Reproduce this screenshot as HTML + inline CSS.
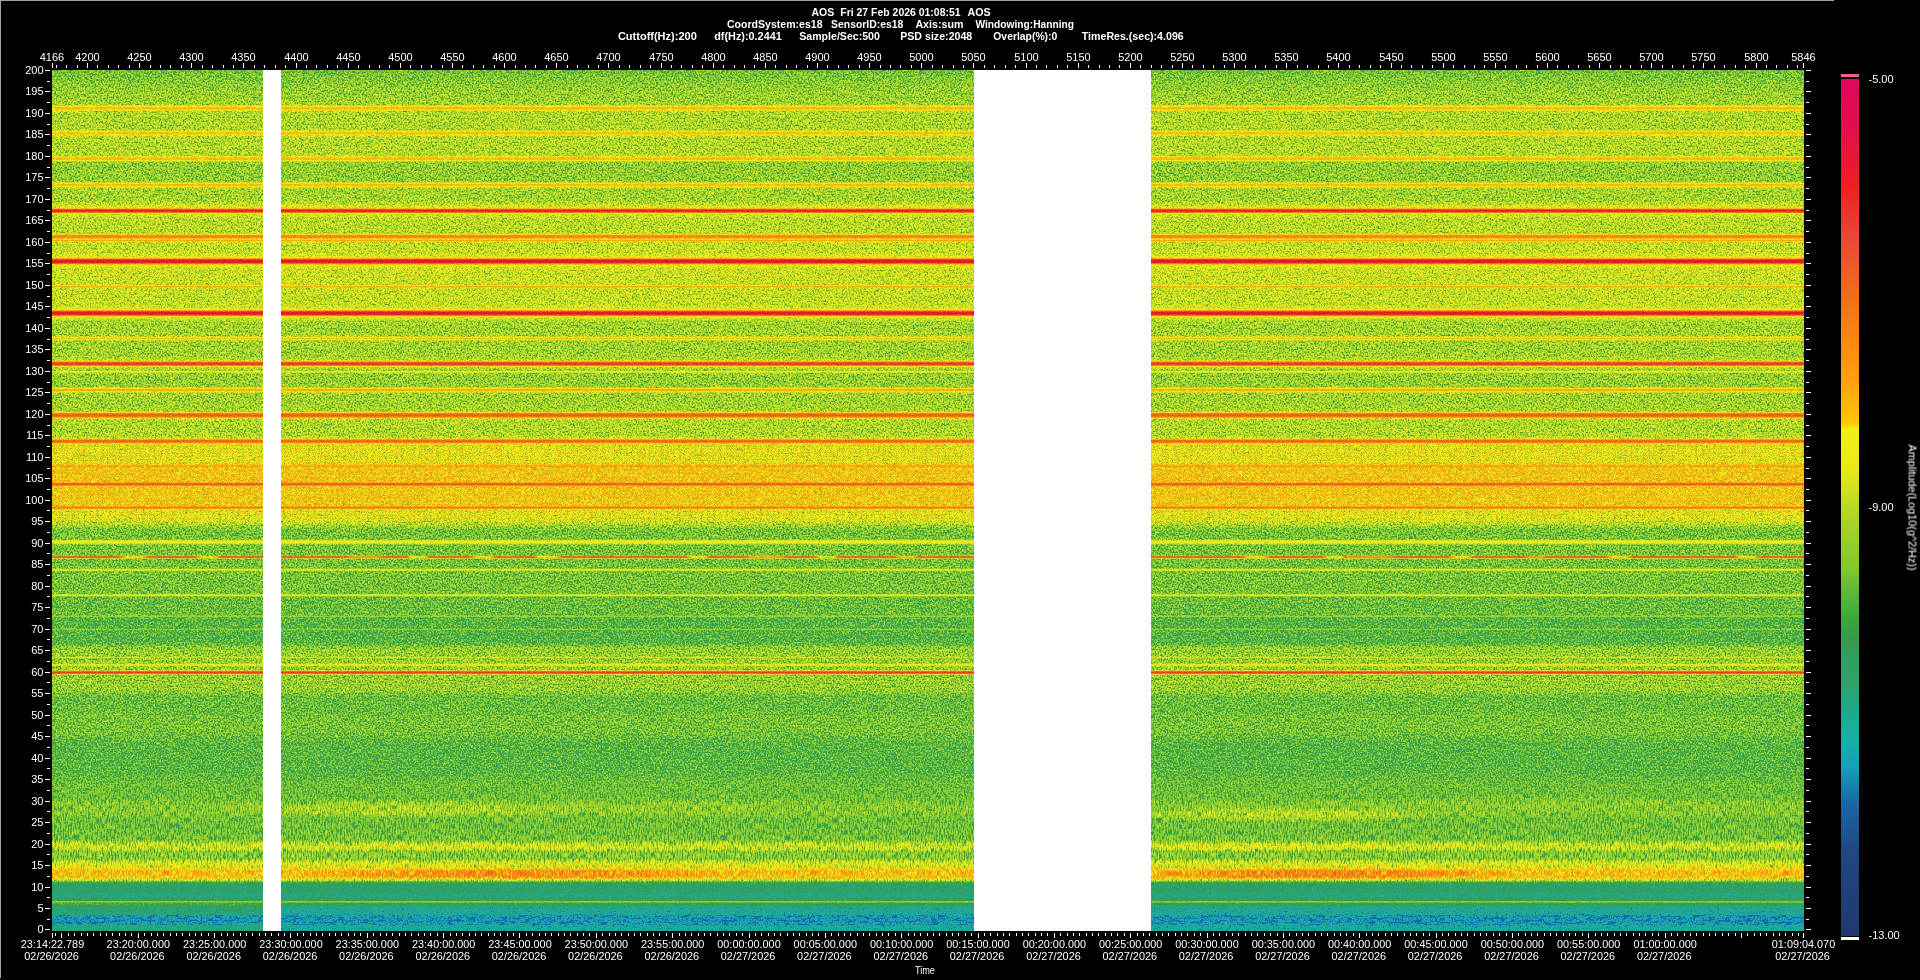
<!DOCTYPE html>
<html><head><meta charset="utf-8"><title>AOS spectrogram</title>
<style>html,body{margin:0;padding:0;background:#000;overflow:hidden}svg{display:block}text{font-family:"Liberation Sans",sans-serif;fill:#fff}</style></head><body>
<svg width="1920" height="980" viewBox="0 0 1920 980" shape-rendering="crispEdges">
<defs>
<linearGradient id="mg" gradientUnits="userSpaceOnUse" x1="0" y1="0" x2="0" y2="980">
<stop offset="0.07194" stop-color="#6aff00"/>
<stop offset="0.08010" stop-color="#6fff00"/>
<stop offset="0.09133" stop-color="#75ff00"/>
<stop offset="0.10561" stop-color="#78fe00"/>
<stop offset="0.10663" stop-color="#7af100"/>
<stop offset="0.10765" stop-color="#82a700"/>
<stop offset="0.10867" stop-color="#916300"/>
<stop offset="0.10969" stop-color="#9c5000"/>
<stop offset="0.11071" stop-color="#9e4e00"/>
<stop offset="0.11173" stop-color="#965a00"/>
<stop offset="0.11276" stop-color="#888a00"/>
<stop offset="0.11378" stop-color="#7ee100"/>
<stop offset="0.11480" stop-color="#7cfd00"/>
<stop offset="0.13112" stop-color="#7cff00"/>
<stop offset="0.13214" stop-color="#7cf500"/>
<stop offset="0.13316" stop-color="#82b800"/>
<stop offset="0.13418" stop-color="#8f6e00"/>
<stop offset="0.13520" stop-color="#9a5600"/>
<stop offset="0.13622" stop-color="#9c5400"/>
<stop offset="0.13724" stop-color="#956200"/>
<stop offset="0.13827" stop-color="#889900"/>
<stop offset="0.13929" stop-color="#7fe800"/>
<stop offset="0.14031" stop-color="#7dfe00"/>
<stop offset="0.15663" stop-color="#7dff00"/>
<stop offset="0.15765" stop-color="#7dfd00"/>
<stop offset="0.15867" stop-color="#80de00"/>
<stop offset="0.15969" stop-color="#8a8700"/>
<stop offset="0.16071" stop-color="#975800"/>
<stop offset="0.16173" stop-color="#9e4d00"/>
<stop offset="0.16276" stop-color="#9b4f00"/>
<stop offset="0.16378" stop-color="#8f6000"/>
<stop offset="0.16480" stop-color="#7ea100"/>
<stop offset="0.16582" stop-color="#75f000"/>
<stop offset="0.16684" stop-color="#74fe00"/>
<stop offset="0.18316" stop-color="#74ff00"/>
<stop offset="0.18418" stop-color="#74fd00"/>
<stop offset="0.18520" stop-color="#76e200"/>
<stop offset="0.18622" stop-color="#828600"/>
<stop offset="0.18724" stop-color="#925700"/>
<stop offset="0.18827" stop-color="#9c4c00"/>
<stop offset="0.18929" stop-color="#9c4d00"/>
<stop offset="0.19031" stop-color="#935b00"/>
<stop offset="0.19133" stop-color="#839400"/>
<stop offset="0.19235" stop-color="#7ae900"/>
<stop offset="0.19337" stop-color="#79fe00"/>
<stop offset="0.20357" stop-color="#79fe00"/>
<stop offset="0.20459" stop-color="#79fd00"/>
<stop offset="0.20663" stop-color="#7df500"/>
<stop offset="0.20765" stop-color="#80eb00"/>
<stop offset="0.20969" stop-color="#86cb00"/>
<stop offset="0.21173" stop-color="#8ba100"/>
<stop offset="0.21276" stop-color="#9d5900"/>
<stop offset="0.21378" stop-color="#c94100"/>
<stop offset="0.21480" stop-color="#de4000"/>
<stop offset="0.21582" stop-color="#d94000"/>
<stop offset="0.21684" stop-color="#b94300"/>
<stop offset="0.21786" stop-color="#907b00"/>
<stop offset="0.21888" stop-color="#88a100"/>
<stop offset="0.22092" stop-color="#83ce00"/>
<stop offset="0.22194" stop-color="#81e300"/>
<stop offset="0.22296" stop-color="#80f100"/>
<stop offset="0.22398" stop-color="#7ff900"/>
<stop offset="0.22500" stop-color="#7ffd00"/>
<stop offset="0.22704" stop-color="#7fff00"/>
<stop offset="0.23724" stop-color="#7ffd00"/>
<stop offset="0.23827" stop-color="#83cf00"/>
<stop offset="0.23929" stop-color="#976300"/>
<stop offset="0.24031" stop-color="#ab4800"/>
<stop offset="0.24133" stop-color="#b34500"/>
<stop offset="0.24235" stop-color="#ad4700"/>
<stop offset="0.24337" stop-color="#9c5b00"/>
<stop offset="0.24439" stop-color="#8e8a00"/>
<stop offset="0.24541" stop-color="#a35100"/>
<stop offset="0.24643" stop-color="#976800"/>
<stop offset="0.24745" stop-color="#83f600"/>
<stop offset="0.24847" stop-color="#82ff00"/>
<stop offset="0.25459" stop-color="#82ff00"/>
<stop offset="0.25663" stop-color="#82fb00"/>
<stop offset="0.25765" stop-color="#83f500"/>
<stop offset="0.25867" stop-color="#84e700"/>
<stop offset="0.25969" stop-color="#86d100"/>
<stop offset="0.26071" stop-color="#89b400"/>
<stop offset="0.26173" stop-color="#8d9900"/>
<stop offset="0.26276" stop-color="#918100"/>
<stop offset="0.26378" stop-color="#a54f00"/>
<stop offset="0.26480" stop-color="#cd4100"/>
<stop offset="0.26582" stop-color="#e64000"/>
<stop offset="0.26684" stop-color="#ec4000"/>
<stop offset="0.26786" stop-color="#de4000"/>
<stop offset="0.26888" stop-color="#be4200"/>
<stop offset="0.26990" stop-color="#996900"/>
<stop offset="0.27092" stop-color="#908f00"/>
<stop offset="0.27296" stop-color="#89c500"/>
<stop offset="0.27398" stop-color="#86de00"/>
<stop offset="0.27500" stop-color="#85ef00"/>
<stop offset="0.27602" stop-color="#84f900"/>
<stop offset="0.27704" stop-color="#84fd00"/>
<stop offset="0.27908" stop-color="#84ff00"/>
<stop offset="0.29031" stop-color="#84fd00"/>
<stop offset="0.29133" stop-color="#8f9300"/>
<stop offset="0.29235" stop-color="#a35200"/>
<stop offset="0.29337" stop-color="#996500"/>
<stop offset="0.29439" stop-color="#84eb00"/>
<stop offset="0.29541" stop-color="#82ff00"/>
<stop offset="0.30765" stop-color="#82ff00"/>
<stop offset="0.30969" stop-color="#82fc00"/>
<stop offset="0.31071" stop-color="#83f600"/>
<stop offset="0.31173" stop-color="#84ea00"/>
<stop offset="0.31276" stop-color="#85d600"/>
<stop offset="0.31480" stop-color="#8b9f00"/>
<stop offset="0.31582" stop-color="#8f8200"/>
<stop offset="0.31684" stop-color="#a64b00"/>
<stop offset="0.31786" stop-color="#cd4000"/>
<stop offset="0.31888" stop-color="#e44000"/>
<stop offset="0.31990" stop-color="#e84000"/>
<stop offset="0.32092" stop-color="#d94000"/>
<stop offset="0.32194" stop-color="#b74200"/>
<stop offset="0.32296" stop-color="#925f00"/>
<stop offset="0.32398" stop-color="#897800"/>
<stop offset="0.32500" stop-color="#859000"/>
<stop offset="0.32602" stop-color="#80ae00"/>
<stop offset="0.32704" stop-color="#7dce00"/>
<stop offset="0.32806" stop-color="#7ae700"/>
<stop offset="0.32908" stop-color="#79f500"/>
<stop offset="0.33010" stop-color="#79fc00"/>
<stop offset="0.33316" stop-color="#78ff00"/>
<stop offset="0.34235" stop-color="#79fd00"/>
<stop offset="0.34337" stop-color="#7fb900"/>
<stop offset="0.34439" stop-color="#935a00"/>
<stop offset="0.34541" stop-color="#9d4d00"/>
<stop offset="0.34643" stop-color="#935a00"/>
<stop offset="0.34745" stop-color="#7eb600"/>
<stop offset="0.34847" stop-color="#78fd00"/>
<stop offset="0.34949" stop-color="#78ff00"/>
<stop offset="0.35969" stop-color="#78ff00"/>
<stop offset="0.36173" stop-color="#78fc00"/>
<stop offset="0.36276" stop-color="#78f800"/>
<stop offset="0.36378" stop-color="#79ee00"/>
<stop offset="0.36480" stop-color="#7adf00"/>
<stop offset="0.36582" stop-color="#7cca00"/>
<stop offset="0.36684" stop-color="#7eb300"/>
<stop offset="0.36786" stop-color="#839500"/>
<stop offset="0.36888" stop-color="#a14900"/>
<stop offset="0.36990" stop-color="#c54000"/>
<stop offset="0.37092" stop-color="#d54000"/>
<stop offset="0.37194" stop-color="#d04000"/>
<stop offset="0.37296" stop-color="#b54200"/>
<stop offset="0.37398" stop-color="#8c6700"/>
<stop offset="0.37500" stop-color="#7fa400"/>
<stop offset="0.37704" stop-color="#7ad100"/>
<stop offset="0.37806" stop-color="#7acf00"/>
<stop offset="0.37908" stop-color="#8d6300"/>
<stop offset="0.38010" stop-color="#858000"/>
<stop offset="0.38112" stop-color="#76fa00"/>
<stop offset="0.38316" stop-color="#75ff00"/>
<stop offset="0.39337" stop-color="#75ff00"/>
<stop offset="0.39439" stop-color="#76f600"/>
<stop offset="0.39541" stop-color="#7fa000"/>
<stop offset="0.39643" stop-color="#935800"/>
<stop offset="0.39745" stop-color="#a04a00"/>
<stop offset="0.39847" stop-color="#a04a00"/>
<stop offset="0.39949" stop-color="#935a00"/>
<stop offset="0.40051" stop-color="#81a800"/>
<stop offset="0.40153" stop-color="#79f800"/>
<stop offset="0.40255" stop-color="#78ff00"/>
<stop offset="0.41071" stop-color="#78ff00"/>
<stop offset="0.41480" stop-color="#79fe00"/>
<stop offset="0.41684" stop-color="#79f700"/>
<stop offset="0.41888" stop-color="#7be600"/>
<stop offset="0.41990" stop-color="#7fc000"/>
<stop offset="0.42092" stop-color="#965900"/>
<stop offset="0.42194" stop-color="#b24300"/>
<stop offset="0.42296" stop-color="#c24100"/>
<stop offset="0.42398" stop-color="#c54100"/>
<stop offset="0.42500" stop-color="#ba4200"/>
<stop offset="0.42602" stop-color="#a24b00"/>
<stop offset="0.42704" stop-color="#869900"/>
<stop offset="0.42806" stop-color="#7ee300"/>
<stop offset="0.42908" stop-color="#7df000"/>
<stop offset="0.43010" stop-color="#7cf700"/>
<stop offset="0.43112" stop-color="#7cfb00"/>
<stop offset="0.43214" stop-color="#7cfd00"/>
<stop offset="0.43418" stop-color="#7cff00"/>
<stop offset="0.43520" stop-color="#7cff00"/>
<stop offset="0.44235" stop-color="#7cfd00"/>
<stop offset="0.44337" stop-color="#7cfa00"/>
<stop offset="0.44439" stop-color="#7df600"/>
<stop offset="0.44643" stop-color="#82ed00"/>
<stop offset="0.44745" stop-color="#88c900"/>
<stop offset="0.44847" stop-color="#a35500"/>
<stop offset="0.44949" stop-color="#bd4400"/>
<stop offset="0.45051" stop-color="#c24300"/>
<stop offset="0.45153" stop-color="#b24b00"/>
<stop offset="0.45255" stop-color="#97a100"/>
<stop offset="0.45357" stop-color="#8ff400"/>
<stop offset="0.45561" stop-color="#8efb00"/>
<stop offset="0.45969" stop-color="#8eff00"/>
<stop offset="0.47092" stop-color="#8eff00"/>
<stop offset="0.47296" stop-color="#92ff00"/>
<stop offset="0.47398" stop-color="#95e900"/>
<stop offset="0.47500" stop-color="#a48500"/>
<stop offset="0.47602" stop-color="#a58c00"/>
<stop offset="0.47704" stop-color="#9af000"/>
<stop offset="0.47806" stop-color="#99ff00"/>
<stop offset="0.48724" stop-color="#99fe00"/>
<stop offset="0.49133" stop-color="#9af800"/>
<stop offset="0.49235" stop-color="#a2a700"/>
<stop offset="0.49337" stop-color="#bf4c00"/>
<stop offset="0.49439" stop-color="#c54700"/>
<stop offset="0.49541" stop-color="#ad6800"/>
<stop offset="0.49643" stop-color="#99ef00"/>
<stop offset="0.49745" stop-color="#98f900"/>
<stop offset="0.50051" stop-color="#98fe00"/>
<stop offset="0.50255" stop-color="#98ff00"/>
<stop offset="0.51480" stop-color="#98ff00"/>
<stop offset="0.51582" stop-color="#96fd00"/>
<stop offset="0.51684" stop-color="#a37e00"/>
<stop offset="0.51786" stop-color="#b94900"/>
<stop offset="0.51888" stop-color="#a85a00"/>
<stop offset="0.51990" stop-color="#8df300"/>
<stop offset="0.52092" stop-color="#8cff00"/>
<stop offset="0.53010" stop-color="#8cff00"/>
<stop offset="0.53112" stop-color="#88ff00"/>
<stop offset="0.53724" stop-color="#77ff00"/>
<stop offset="0.54031" stop-color="#6eff00"/>
<stop offset="0.54133" stop-color="#6cff00"/>
<stop offset="0.54847" stop-color="#6cff00"/>
<stop offset="0.54949" stop-color="#6df900"/>
<stop offset="0.55051" stop-color="#73b600"/>
<stop offset="0.55153" stop-color="#846200"/>
<stop offset="0.55255" stop-color="#904e00"/>
<stop offset="0.55357" stop-color="#904e00"/>
<stop offset="0.55459" stop-color="#846200"/>
<stop offset="0.55561" stop-color="#73b600"/>
<stop offset="0.55663" stop-color="#6df900"/>
<stop offset="0.55765" stop-color="#6cff00"/>
<stop offset="0.56582" stop-color="#6cfd00"/>
<stop offset="0.56684" stop-color="#74ad00"/>
<stop offset="0.56786" stop-color="#8c5300"/>
<stop offset="0.56888" stop-color="#914d00"/>
<stop offset="0.56990" stop-color="#7d7200"/>
<stop offset="0.57092" stop-color="#6cf200"/>
<stop offset="0.57194" stop-color="#6bff00"/>
<stop offset="0.57908" stop-color="#6bfe00"/>
<stop offset="0.58010" stop-color="#73a800"/>
<stop offset="0.58112" stop-color="#895600"/>
<stop offset="0.58214" stop-color="#836500"/>
<stop offset="0.58316" stop-color="#6ee700"/>
<stop offset="0.58418" stop-color="#6cff00"/>
<stop offset="0.60459" stop-color="#6cff00"/>
<stop offset="0.60561" stop-color="#6ee600"/>
<stop offset="0.60663" stop-color="#826200"/>
<stop offset="0.60765" stop-color="#895300"/>
<stop offset="0.60867" stop-color="#729e00"/>
<stop offset="0.60969" stop-color="#68fe00"/>
<stop offset="0.62704" stop-color="#68fe00"/>
<stop offset="0.62806" stop-color="#6fac00"/>
<stop offset="0.62908" stop-color="#767a00"/>
<stop offset="0.63010" stop-color="#66ea00"/>
<stop offset="0.63112" stop-color="#63ff00"/>
<stop offset="0.63214" stop-color="#62ff00"/>
<stop offset="0.64031" stop-color="#62fe00"/>
<stop offset="0.64133" stop-color="#69b900"/>
<stop offset="0.64235" stop-color="#718100"/>
<stop offset="0.64337" stop-color="#64eb00"/>
<stop offset="0.64439" stop-color="#62ff00"/>
<stop offset="0.65561" stop-color="#62ff00"/>
<stop offset="0.65663" stop-color="#64ff00"/>
<stop offset="0.66071" stop-color="#73ff00"/>
<stop offset="0.66173" stop-color="#75ff00"/>
<stop offset="0.66888" stop-color="#75ff00"/>
<stop offset="0.66990" stop-color="#79d000"/>
<stop offset="0.67092" stop-color="#838900"/>
<stop offset="0.67194" stop-color="#77e600"/>
<stop offset="0.67296" stop-color="#75ff00"/>
<stop offset="0.67602" stop-color="#75fd00"/>
<stop offset="0.67704" stop-color="#7bba00"/>
<stop offset="0.67806" stop-color="#8a6a00"/>
<stop offset="0.67908" stop-color="#887100"/>
<stop offset="0.68010" stop-color="#79d200"/>
<stop offset="0.68112" stop-color="#75fe00"/>
<stop offset="0.68316" stop-color="#75ff00"/>
<stop offset="0.68418" stop-color="#819500"/>
<stop offset="0.68520" stop-color="#bd4100"/>
<stop offset="0.68622" stop-color="#d44000"/>
<stop offset="0.68724" stop-color="#bd4100"/>
<stop offset="0.68827" stop-color="#819500"/>
<stop offset="0.68929" stop-color="#75ff00"/>
<stop offset="0.70357" stop-color="#75ff00"/>
<stop offset="0.70459" stop-color="#74ff00"/>
<stop offset="0.71071" stop-color="#69ff00"/>
<stop offset="0.71173" stop-color="#68ff00"/>
<stop offset="0.72602" stop-color="#68ff00"/>
<stop offset="0.73112" stop-color="#6cff00"/>
<stop offset="0.74643" stop-color="#6cff00"/>
<stop offset="0.75867" stop-color="#63ff00"/>
<stop offset="0.78520" stop-color="#63ff00"/>
<stop offset="0.78622" stop-color="#63ff02"/>
<stop offset="0.78724" stop-color="#63ff07"/>
<stop offset="0.80051" stop-color="#69ff44"/>
<stop offset="0.81480" stop-color="#69ff85"/>
<stop offset="0.81684" stop-color="#6cff8d"/>
<stop offset="0.81990" stop-color="#70ff8f"/>
<stop offset="0.83010" stop-color="#70ff98"/>
<stop offset="0.83622" stop-color="#69ff9d"/>
<stop offset="0.85663" stop-color="#6bffae"/>
<stop offset="0.85765" stop-color="#6effaf"/>
<stop offset="0.86071" stop-color="#7effb1"/>
<stop offset="0.86173" stop-color="#81ffb2"/>
<stop offset="0.86582" stop-color="#81ffb5"/>
<stop offset="0.86684" stop-color="#7effb6"/>
<stop offset="0.86888" stop-color="#72ffb8"/>
<stop offset="0.86990" stop-color="#70ffb9"/>
<stop offset="0.87602" stop-color="#70ffbe"/>
<stop offset="0.87704" stop-color="#73ffbf"/>
<stop offset="0.87806" stop-color="#7bffbf"/>
<stop offset="0.87908" stop-color="#82ffbf"/>
<stop offset="0.88010" stop-color="#86ffbf"/>
<stop offset="0.88418" stop-color="#89ffbf"/>
<stop offset="0.88520" stop-color="#8cffbf"/>
<stop offset="0.88724" stop-color="#98ffbf"/>
<stop offset="0.88827" stop-color="#9cffbf"/>
<stop offset="0.89439" stop-color="#9cffbf"/>
<stop offset="0.89541" stop-color="#98ffbf"/>
<stop offset="0.89643" stop-color="#91f9bf"/>
<stop offset="0.89745" stop-color="#89ecbf"/>
<stop offset="0.89847" stop-color="#7cdfb7"/>
<stop offset="0.89949" stop-color="#69d2a6"/>
<stop offset="0.90051" stop-color="#5bc695"/>
<stop offset="0.90153" stop-color="#52b984"/>
<stop offset="0.90255" stop-color="#4eb273"/>
<stop offset="0.90357" stop-color="#4eb262"/>
<stop offset="0.90459" stop-color="#4eb259"/>
<stop offset="0.90969" stop-color="#4db256"/>
<stop offset="0.91276" stop-color="#46b254"/>
<stop offset="0.91480" stop-color="#46b253"/>
<stop offset="0.91582" stop-color="#49b253"/>
<stop offset="0.91684" stop-color="#4eb252"/>
<stop offset="0.91786" stop-color="#51b252"/>
<stop offset="0.91888" stop-color="#597951"/>
<stop offset="0.91990" stop-color="#6e3d50"/>
<stop offset="0.92092" stop-color="#684750"/>
<stop offset="0.92194" stop-color="#53a24f"/>
<stop offset="0.92296" stop-color="#51b24f"/>
<stop offset="0.92398" stop-color="#4db24e"/>
<stop offset="0.92500" stop-color="#44b24e"/>
<stop offset="0.92602" stop-color="#40b24d"/>
<stop offset="0.93214" stop-color="#3eb24a"/>
<stop offset="0.93316" stop-color="#3bb249"/>
<stop offset="0.93418" stop-color="#36b249"/>
<stop offset="0.93520" stop-color="#33b248"/>
<stop offset="0.94133" stop-color="#33b245"/>
<stop offset="0.94235" stop-color="#35b244"/>
<stop offset="0.94337" stop-color="#39b243"/>
<stop offset="0.94439" stop-color="#3bb243"/>
<stop offset="0.94949" stop-color="#3bb240"/>
</linearGradient>
<linearGradient id="fb" gradientUnits="userSpaceOnUse" x1="0" y1="0" x2="0" y2="980">
<stop offset="0.07194" stop-color="#6fbf34"/>
<stop offset="0.10663" stop-color="#a4d128"/>
<stop offset="0.10765" stop-color="#c2db25"/>
<stop offset="0.10867" stop-color="#ecec18"/>
<stop offset="0.10969" stop-color="#ffbc09"/>
<stop offset="0.11071" stop-color="#ffb70a"/>
<stop offset="0.11173" stop-color="#f0f018"/>
<stop offset="0.11276" stop-color="#dfe51b"/>
<stop offset="0.11378" stop-color="#b2d628"/>
<stop offset="0.11480" stop-color="#abd428"/>
<stop offset="0.13214" stop-color="#add428"/>
<stop offset="0.13316" stop-color="#c4dc24"/>
<stop offset="0.13418" stop-color="#ebeb18"/>
<stop offset="0.13520" stop-color="#ffc508"/>
<stop offset="0.13622" stop-color="#ffbd09"/>
<stop offset="0.13724" stop-color="#efef18"/>
<stop offset="0.13827" stop-color="#dce41c"/>
<stop offset="0.13929" stop-color="#b6d728"/>
<stop offset="0.15765" stop-color="#b1d628"/>
<stop offset="0.15867" stop-color="#bad927"/>
<stop offset="0.15969" stop-color="#e7e818"/>
<stop offset="0.16071" stop-color="#f9dc0e"/>
<stop offset="0.16173" stop-color="#ffb60a"/>
<stop offset="0.16276" stop-color="#ffbf08"/>
<stop offset="0.16378" stop-color="#ebeb18"/>
<stop offset="0.16480" stop-color="#b2d628"/>
<stop offset="0.16582" stop-color="#96cd2b"/>
<stop offset="0.18418" stop-color="#93cd2b"/>
<stop offset="0.18520" stop-color="#99ce2a"/>
<stop offset="0.18622" stop-color="#c3dc24"/>
<stop offset="0.18724" stop-color="#eded18"/>
<stop offset="0.18827" stop-color="#ffbc09"/>
<stop offset="0.18929" stop-color="#ffbc09"/>
<stop offset="0.19031" stop-color="#eded18"/>
<stop offset="0.19235" stop-color="#a5d228"/>
<stop offset="0.20357" stop-color="#a0d028"/>
<stop offset="0.20765" stop-color="#b8d828"/>
<stop offset="0.21071" stop-color="#dfe51b"/>
<stop offset="0.21173" stop-color="#e8e818"/>
<stop offset="0.21276" stop-color="#ffb80a"/>
<stop offset="0.21378" stop-color="#eb582b"/>
<stop offset="0.21480" stop-color="#ec2221"/>
<stop offset="0.21582" stop-color="#ea312a"/>
<stop offset="0.21684" stop-color="#f37917"/>
<stop offset="0.21786" stop-color="#ebeb18"/>
<stop offset="0.22194" stop-color="#bfda26"/>
<stop offset="0.23724" stop-color="#b7d828"/>
<stop offset="0.23827" stop-color="#cade22"/>
<stop offset="0.23929" stop-color="#f1ed17"/>
<stop offset="0.24031" stop-color="#fc9512"/>
<stop offset="0.24133" stop-color="#f78514"/>
<stop offset="0.24235" stop-color="#fa9013"/>
<stop offset="0.24337" stop-color="#ffbd09"/>
<stop offset="0.24439" stop-color="#eaea18"/>
<stop offset="0.24541" stop-color="#ffa70e"/>
<stop offset="0.24643" stop-color="#f6e412"/>
<stop offset="0.24745" stop-color="#c7dd23"/>
<stop offset="0.25765" stop-color="#c8dd23"/>
<stop offset="0.25969" stop-color="#d5e21e"/>
<stop offset="0.26173" stop-color="#e9e918"/>
<stop offset="0.26276" stop-color="#ecec18"/>
<stop offset="0.26378" stop-color="#ffa010"/>
<stop offset="0.26480" stop-color="#e94f33"/>
<stop offset="0.26582" stop-color="#e81931"/>
<stop offset="0.26684" stop-color="#e41340"/>
<stop offset="0.26786" stop-color="#ec2221"/>
<stop offset="0.26888" stop-color="#f06e19"/>
<stop offset="0.26990" stop-color="#ffca08"/>
<stop offset="0.27092" stop-color="#ebeb18"/>
<stop offset="0.27602" stop-color="#cedf21"/>
<stop offset="0.29031" stop-color="#ccdf21"/>
<stop offset="0.29133" stop-color="#ebeb18"/>
<stop offset="0.29235" stop-color="#ffa60e"/>
<stop offset="0.29337" stop-color="#ffc808"/>
<stop offset="0.29439" stop-color="#ccdf21"/>
<stop offset="0.29541" stop-color="#c4dc24"/>
<stop offset="0.31071" stop-color="#c7dd23"/>
<stop offset="0.31276" stop-color="#d3e11f"/>
<stop offset="0.31480" stop-color="#e8e818"/>
<stop offset="0.31582" stop-color="#ebeb18"/>
<stop offset="0.31684" stop-color="#fe9e10"/>
<stop offset="0.31786" stop-color="#e94e33"/>
<stop offset="0.31888" stop-color="#e91b2d"/>
<stop offset="0.31990" stop-color="#e61736"/>
<stop offset="0.32092" stop-color="#ea312a"/>
<stop offset="0.32194" stop-color="#f47d16"/>
<stop offset="0.32296" stop-color="#eded18"/>
<stop offset="0.32398" stop-color="#e3e61a"/>
<stop offset="0.32602" stop-color="#bbd927"/>
<stop offset="0.32806" stop-color="#a6d228"/>
<stop offset="0.34235" stop-color="#a0d028"/>
<stop offset="0.34337" stop-color="#b5d728"/>
<stop offset="0.34439" stop-color="#eeee18"/>
<stop offset="0.34541" stop-color="#ffb80a"/>
<stop offset="0.34643" stop-color="#eeee18"/>
<stop offset="0.34745" stop-color="#b4d728"/>
<stop offset="0.34847" stop-color="#9dcf29"/>
<stop offset="0.36378" stop-color="#a1d028"/>
<stop offset="0.36684" stop-color="#b4d728"/>
<stop offset="0.36786" stop-color="#c6dd23"/>
<stop offset="0.36888" stop-color="#ffae0c"/>
<stop offset="0.36990" stop-color="#ed6025"/>
<stop offset="0.37092" stop-color="#e93b30"/>
<stop offset="0.37194" stop-color="#e84937"/>
<stop offset="0.37296" stop-color="#f58115"/>
<stop offset="0.37398" stop-color="#e9e918"/>
<stop offset="0.37500" stop-color="#b7d828"/>
<stop offset="0.37704" stop-color="#a4d128"/>
<stop offset="0.37806" stop-color="#a4d128"/>
<stop offset="0.37908" stop-color="#eaea18"/>
<stop offset="0.38010" stop-color="#d0e020"/>
<stop offset="0.38112" stop-color="#98ce2a"/>
<stop offset="0.39439" stop-color="#99ce2a"/>
<stop offset="0.39541" stop-color="#b8d828"/>
<stop offset="0.39643" stop-color="#eeee18"/>
<stop offset="0.39745" stop-color="#ffb00c"/>
<stop offset="0.39847" stop-color="#ffb00c"/>
<stop offset="0.39949" stop-color="#eeee18"/>
<stop offset="0.40051" stop-color="#bdda26"/>
<stop offset="0.40153" stop-color="#a1d028"/>
<stop offset="0.41786" stop-color="#a5d228"/>
<stop offset="0.41888" stop-color="#a9d328"/>
<stop offset="0.41990" stop-color="#b6d728"/>
<stop offset="0.42092" stop-color="#efef18"/>
<stop offset="0.42194" stop-color="#f78714"/>
<stop offset="0.42296" stop-color="#ee6620"/>
<stop offset="0.42398" stop-color="#ed6025"/>
<stop offset="0.42500" stop-color="#f27717"/>
<stop offset="0.42602" stop-color="#ffa90e"/>
<stop offset="0.42704" stop-color="#d6e21e"/>
<stop offset="0.42806" stop-color="#b2d628"/>
<stop offset="0.44337" stop-color="#acd428"/>
<stop offset="0.44541" stop-color="#b9d828"/>
<stop offset="0.44643" stop-color="#c5dc24"/>
<stop offset="0.44745" stop-color="#dce41c"/>
<stop offset="0.44847" stop-color="#ffa60e"/>
<stop offset="0.44949" stop-color="#f07218"/>
<stop offset="0.45051" stop-color="#ee6620"/>
<stop offset="0.45153" stop-color="#f78614"/>
<stop offset="0.45255" stop-color="#f0f018"/>
<stop offset="0.47398" stop-color="#efef18"/>
<stop offset="0.47500" stop-color="#ffa40f"/>
<stop offset="0.47602" stop-color="#ffa110"/>
<stop offset="0.47704" stop-color="#ffc108"/>
<stop offset="0.47806" stop-color="#ffc808"/>
<stop offset="0.49133" stop-color="#ffc508"/>
<stop offset="0.49235" stop-color="#ffab0d"/>
<stop offset="0.49337" stop-color="#f06e1a"/>
<stop offset="0.49439" stop-color="#ed6024"/>
<stop offset="0.49541" stop-color="#fa9013"/>
<stop offset="0.49643" stop-color="#ffca08"/>
<stop offset="0.51480" stop-color="#fcd50b"/>
<stop offset="0.51582" stop-color="#f0f018"/>
<stop offset="0.51684" stop-color="#ffa80e"/>
<stop offset="0.51786" stop-color="#f37817"/>
<stop offset="0.51888" stop-color="#fd9a11"/>
<stop offset="0.51990" stop-color="#e9e918"/>
<stop offset="0.53010" stop-color="#e9e918"/>
<stop offset="0.53418" stop-color="#b8d828"/>
<stop offset="0.54031" stop-color="#83c92f"/>
<stop offset="0.54949" stop-color="#80c830"/>
<stop offset="0.55051" stop-color="#91cc2c"/>
<stop offset="0.55153" stop-color="#cedf21"/>
<stop offset="0.55255" stop-color="#ecec18"/>
<stop offset="0.55357" stop-color="#ecec18"/>
<stop offset="0.55459" stop-color="#cedf21"/>
<stop offset="0.55561" stop-color="#91cc2c"/>
<stop offset="0.55663" stop-color="#80c830"/>
<stop offset="0.56582" stop-color="#7fc730"/>
<stop offset="0.56684" stop-color="#93cd2b"/>
<stop offset="0.56786" stop-color="#e9e918"/>
<stop offset="0.56888" stop-color="#ecec18"/>
<stop offset="0.56990" stop-color="#b1d628"/>
<stop offset="0.57092" stop-color="#7bc531"/>
<stop offset="0.57908" stop-color="#76c333"/>
<stop offset="0.58010" stop-color="#92cd2b"/>
<stop offset="0.58112" stop-color="#e2e61a"/>
<stop offset="0.58214" stop-color="#c7dd23"/>
<stop offset="0.58316" stop-color="#84c92f"/>
<stop offset="0.60459" stop-color="#7ec730"/>
<stop offset="0.60561" stop-color="#83c92f"/>
<stop offset="0.60663" stop-color="#c6dd23"/>
<stop offset="0.60765" stop-color="#e1e61a"/>
<stop offset="0.60867" stop-color="#8ecc2c"/>
<stop offset="0.60969" stop-color="#65ba37"/>
<stop offset="0.62704" stop-color="#65ba37"/>
<stop offset="0.62806" stop-color="#85c92f"/>
<stop offset="0.62908" stop-color="#99ce2a"/>
<stop offset="0.63010" stop-color="#5cb638"/>
<stop offset="0.63112" stop-color="#4eb138"/>
<stop offset="0.64031" stop-color="#4cb038"/>
<stop offset="0.64133" stop-color="#69bd36"/>
<stop offset="0.64235" stop-color="#8ccb2d"/>
<stop offset="0.64337" stop-color="#52b338"/>
<stop offset="0.64439" stop-color="#4bb038"/>
<stop offset="0.65561" stop-color="#4bb038"/>
<stop offset="0.65663" stop-color="#54b338"/>
<stop offset="0.65867" stop-color="#7bc531"/>
<stop offset="0.66071" stop-color="#92cc2c"/>
<stop offset="0.66888" stop-color="#97ce2a"/>
<stop offset="0.66990" stop-color="#a2d128"/>
<stop offset="0.67092" stop-color="#c7dd23"/>
<stop offset="0.67194" stop-color="#9ccf29"/>
<stop offset="0.67602" stop-color="#97ce2a"/>
<stop offset="0.67704" stop-color="#aad328"/>
<stop offset="0.67806" stop-color="#e7e818"/>
<stop offset="0.67908" stop-color="#dee51b"/>
<stop offset="0.68010" stop-color="#a1d028"/>
<stop offset="0.68112" stop-color="#97ce2a"/>
<stop offset="0.68316" stop-color="#97ce2a"/>
<stop offset="0.68418" stop-color="#bdda26"/>
<stop offset="0.68520" stop-color="#f07118"/>
<stop offset="0.68622" stop-color="#e93e32"/>
<stop offset="0.68724" stop-color="#f07118"/>
<stop offset="0.68827" stop-color="#bdda26"/>
<stop offset="0.68929" stop-color="#97ce2a"/>
<stop offset="0.70459" stop-color="#94cd2b"/>
<stop offset="0.70867" stop-color="#7fc730"/>
<stop offset="0.71071" stop-color="#6abd36"/>
<stop offset="0.72602" stop-color="#64ba37"/>
<stop offset="0.73112" stop-color="#7ec731"/>
<stop offset="0.74745" stop-color="#78c432"/>
<stop offset="0.75867" stop-color="#4eb138"/>
<stop offset="0.81480" stop-color="#6dbe35"/>
<stop offset="0.81888" stop-color="#85c92f"/>
<stop offset="0.83112" stop-color="#86c92f"/>
<stop offset="0.83622" stop-color="#6dbf35"/>
<stop offset="0.85663" stop-color="#75c333"/>
<stop offset="0.85969" stop-color="#a0d028"/>
<stop offset="0.86071" stop-color="#b4d728"/>
<stop offset="0.86173" stop-color="#c0db25"/>
<stop offset="0.86582" stop-color="#c0db25"/>
<stop offset="0.86684" stop-color="#b3d628"/>
<stop offset="0.86888" stop-color="#8fcc2c"/>
<stop offset="0.86990" stop-color="#88ca2e"/>
<stop offset="0.87602" stop-color="#88ca2e"/>
<stop offset="0.87704" stop-color="#92cc2c"/>
<stop offset="0.87806" stop-color="#a7d228"/>
<stop offset="0.87908" stop-color="#c5dc24"/>
<stop offset="0.88010" stop-color="#d7e21e"/>
<stop offset="0.88418" stop-color="#e1e61a"/>
<stop offset="0.88622" stop-color="#eded18"/>
<stop offset="0.88724" stop-color="#ffcd08"/>
<stop offset="0.88827" stop-color="#ffbd09"/>
<stop offset="0.89439" stop-color="#ffbd09"/>
<stop offset="0.89541" stop-color="#ffd008"/>
<stop offset="0.89643" stop-color="#ecec18"/>
<stop offset="0.89745" stop-color="#e4e719"/>
<stop offset="0.89847" stop-color="#add428"/>
<stop offset="0.89949" stop-color="#6dbe35"/>
<stop offset="0.90051" stop-color="#38a142"/>
<stop offset="0.90153" stop-color="#319f5f"/>
<stop offset="0.90255" stop-color="#30a065"/>
<stop offset="0.90969" stop-color="#30a067"/>
<stop offset="0.91071" stop-color="#2ea16c"/>
<stop offset="0.91276" stop-color="#26a57d"/>
<stop offset="0.91480" stop-color="#26a57d"/>
<stop offset="0.91684" stop-color="#30a065"/>
<stop offset="0.91786" stop-color="#30a061"/>
<stop offset="0.91888" stop-color="#389b4b"/>
<stop offset="0.91990" stop-color="#84c92f"/>
<stop offset="0.92092" stop-color="#65ba37"/>
<stop offset="0.92194" stop-color="#329e5d"/>
<stop offset="0.92398" stop-color="#30a067"/>
<stop offset="0.92500" stop-color="#22a784"/>
<stop offset="0.92602" stop-color="#1dab94"/>
<stop offset="0.93214" stop-color="#1cac99"/>
<stop offset="0.93316" stop-color="#19afa3"/>
<stop offset="0.93418" stop-color="#18a7b1"/>
<stop offset="0.94133" stop-color="#18a1b7"/>
<stop offset="0.94337" stop-color="#18aeaa"/>
<stop offset="0.94949" stop-color="#19afa5"/>
</linearGradient>
<linearGradient id="cbg" gradientUnits="userSpaceOnUse" x1="0" y1="79" x2="0" y2="936">
<stop offset="0.0000" stop-color="#dc0860"/>
<stop offset="0.0630" stop-color="#e21048"/>
<stop offset="0.1260" stop-color="#ec2020"/>
<stop offset="0.1832" stop-color="#e84838"/>
<stop offset="0.2567" stop-color="#f07018"/>
<stop offset="0.3512" stop-color="#ffa010"/>
<stop offset="0.3932" stop-color="#ffc008"/>
<stop offset="0.4037" stop-color="#ffd008"/>
<stop offset="0.4084" stop-color="#f0f018"/>
<stop offset="0.4562" stop-color="#e8e818"/>
<stop offset="0.4796" stop-color="#d0e020"/>
<stop offset="0.4994" stop-color="#b8d828"/>
<stop offset="0.5263" stop-color="#a0d028"/>
<stop offset="0.5729" stop-color="#80c830"/>
<stop offset="0.5963" stop-color="#60b838"/>
<stop offset="0.6313" stop-color="#38a838"/>
<stop offset="0.6546" stop-color="#389850"/>
<stop offset="0.6779" stop-color="#30a060"/>
<stop offset="0.7013" stop-color="#30a068"/>
<stop offset="0.7363" stop-color="#20a888"/>
<stop offset="0.7713" stop-color="#18b0a8"/>
<stop offset="0.8016" stop-color="#18a0b8"/>
<stop offset="0.8436" stop-color="#1868a8"/>
<stop offset="0.9008" stop-color="#204880"/>
<stop offset="0.9988" stop-color="#203870"/>
</linearGradient>
<filter id="spec" filterUnits="userSpaceOnUse" x="52" y="70" width="1752" height="861" color-interpolation-filters="sRGB">
<feTurbulence type="fractalNoise" baseFrequency="0.83 0.71" numOctaves="2" seed="7" result="n0"/>
<feColorMatrix in="n0" type="matrix" values="1 0 0 0 0 1 0 0 0 0 1 0 0 0 0 0 0 0 0 1" result="n1"/>
<feConvolveMatrix in="n1" order="3" kernelMatrix="1 6 1 6 36 6 1 6 1" divisor="64" edgeMode="duplicate" preserveAlpha="true" result="ni"/>
<feTurbulence type="fractalNoise" baseFrequency="0.79 0.17" numOctaves="2" seed="11" result="s0"/>
<feColorMatrix in="s0" type="matrix" values="0.62 0 0 0 0.19 0.62 0 0 0 0.19 0.62 0 0 0 0.19 0 0 0 0 1" result="ns"/>
<feColorMatrix in="SourceGraphic" type="matrix" values="0 0 1 0 0 0 0 1 0 0 0 0 1 0 0 0 0 0 0 1" result="mb"/>
<feComposite in="mb" in2="ns" operator="arithmetic" k1="1" k2="0" k3="0" k4="0" result="t1"/>
<feComposite in="mb" in2="ni" operator="arithmetic" k1="-1" k2="0" k3="1" k4="0" result="t2"/>
<feComposite in="t1" in2="t2" operator="arithmetic" k1="0" k2="1" k3="1" k4="0" result="ng0"/>
<feComponentTransfer in="ng0" result="ng"><feFuncR type="table" tableValues="0 0.1875 0.5 0.6875 0.8750"/><feFuncG type="table" tableValues="0 0.1875 0.5 0.6875 0.8750"/><feFuncB type="table" tableValues="0 0.1875 0.5 0.6875 0.8750"/></feComponentTransfer>
<feColorMatrix in="SourceGraphic" type="matrix" values="1 0 0 0 0 1 0 0 0 0 1 0 0 0 0 0 0 0 0 1" result="mv"/>
<feColorMatrix in="SourceGraphic" type="matrix" values="0 1 0 0 0 0 1 0 0 0 0 1 0 0 0 0 0 0 0 1" result="ma"/>
<feComposite in="ma" in2="ng" operator="arithmetic" k1="0.9" k2="-0.45" k3="0" k4="0.5" result="nm"/>
<feComposite in="mv" in2="nm" operator="arithmetic" k1="0" k2="1" k3="1" k4="-0.4899" result="v"/>
<feComponentTransfer in="v" result="A"><feFuncR type="table" tableValues="0.125 0.125 0.125 0.125 0.125 0.125 0.125 0.125 0.125 0.125 0.125 0.125 0.125 0.125 0.125 0.125 0.124 0.121 0.118 0.114 0.111 0.107 0.104 0.100 0.097 0.094 0.094 0.094 0.094 0.094 0.094 0.094 0.094 0.094 0.094 0.094 0.094 0.097 0.103 0.108 0.114 0.120 0.125 0.136 0.147 0.158 0.170 0.181 0.188 0.188 0.188 0.188 0.193 0.202 0.210 0.218 0.220 0.220 0.220 0.223 0.251 0.279 0.307 0.335 0.363 0.394 0.427 0.461 0.494 0.515 0.532 0.549 0.565 0.582 0.599 0.616 0.634 0.656 0.678 0.700 0.722 0.751 0.781 0.810 0.836 0.862 0.887 0.910 0.914 0.918 0.922 0.927 0.931 0.935 0.939 0.974 1.000 1.000 1.000 1.000 1.000 1.000 1.000 1.000 0.999 0.995 0.991 0.987 0.983 0.980 0.976 0.972 0.968 0.964 0.960 0.956 0.952 0.948 0.945 0.941 0.938 0.936 0.933 0.930 0.928 0.925 0.922 0.920 0.917 0.914 0.912 0.910 0.912 0.914 0.916 0.917 0.919 0.921 0.922 0.924 0.925 0.921 0.917 0.913 0.909 0.905 0.901 0.898 0.894 0.890 0.886 0.884 0.881 0.879 0.877 0.874 0.872 0.870 0.867 0.865 0.863"/><feFuncG type="table" tableValues="0.220 0.224 0.228 0.232 0.236 0.240 0.244 0.248 0.252 0.256 0.260 0.264 0.268 0.272 0.276 0.280 0.286 0.300 0.314 0.328 0.341 0.355 0.369 0.382 0.396 0.412 0.445 0.478 0.510 0.543 0.576 0.608 0.633 0.646 0.659 0.671 0.684 0.687 0.682 0.676 0.670 0.665 0.659 0.654 0.648 0.642 0.637 0.631 0.627 0.627 0.627 0.627 0.622 0.614 0.606 0.597 0.611 0.627 0.644 0.660 0.671 0.683 0.694 0.705 0.716 0.730 0.747 0.764 0.781 0.788 0.792 0.796 0.800 0.804 0.809 0.813 0.818 0.825 0.832 0.840 0.847 0.857 0.867 0.877 0.885 0.894 0.902 0.910 0.914 0.918 0.922 0.927 0.931 0.935 0.939 0.871 0.791 0.753 0.734 0.716 0.697 0.679 0.660 0.641 0.624 0.612 0.599 0.587 0.574 0.562 0.550 0.537 0.525 0.512 0.500 0.487 0.475 0.463 0.450 0.438 0.424 0.411 0.398 0.384 0.371 0.358 0.344 0.331 0.318 0.304 0.291 0.276 0.259 0.242 0.225 0.208 0.191 0.174 0.157 0.139 0.124 0.118 0.112 0.106 0.099 0.093 0.087 0.081 0.075 0.068 0.062 0.059 0.056 0.053 0.050 0.047 0.044 0.041 0.038 0.034 0.031"/><feFuncB type="table" tableValues="0.439 0.443 0.447 0.451 0.455 0.459 0.463 0.467 0.471 0.475 0.479 0.483 0.487 0.491 0.495 0.499 0.507 0.524 0.541 0.558 0.576 0.593 0.610 0.627 0.644 0.660 0.669 0.679 0.688 0.697 0.707 0.716 0.716 0.703 0.690 0.678 0.665 0.646 0.624 0.602 0.579 0.557 0.535 0.512 0.490 0.467 0.445 0.423 0.405 0.397 0.388 0.380 0.366 0.350 0.333 0.316 0.292 0.267 0.242 0.220 0.220 0.220 0.220 0.220 0.220 0.215 0.207 0.199 0.190 0.185 0.181 0.177 0.172 0.168 0.164 0.160 0.157 0.157 0.157 0.157 0.157 0.147 0.137 0.127 0.119 0.110 0.102 0.094 0.094 0.094 0.094 0.094 0.094 0.094 0.094 0.059 0.031 0.031 0.036 0.041 0.045 0.050 0.055 0.059 0.063 0.065 0.067 0.070 0.072 0.074 0.076 0.078 0.080 0.082 0.084 0.086 0.088 0.090 0.092 0.095 0.106 0.117 0.127 0.138 0.149 0.159 0.170 0.181 0.191 0.202 0.213 0.216 0.206 0.196 0.185 0.175 0.165 0.154 0.144 0.134 0.128 0.144 0.159 0.175 0.191 0.206 0.222 0.237 0.253 0.268 0.283 0.293 0.302 0.311 0.321 0.330 0.339 0.348 0.358 0.367 0.376"/></feComponentTransfer>
<feConvolveMatrix in="A" order="3" kernelMatrix="1 2 1 2 4 2 1 2 1" divisor="16" edgeMode="duplicate" preserveAlpha="true" result="B"/>
<feColorMatrix in="A" type="matrix" values="0.299 0.587 0.114 0 0 0.299 0.587 0.114 0 0 0.299 0.587 0.114 0 0 0 0 0 0 1" result="YA"/>
<feColorMatrix in="B" type="matrix" values="0.299 0.587 0.114 0 0 0.299 0.587 0.114 0 0 0.299 0.587 0.114 0 0 0 0 0 0 1" result="YB"/>
<feComposite in="YA" in2="YB" operator="arithmetic" k1="0" k2="1" k3="-1" k4="0.5" result="D"/>
<feComposite in="B" in2="D" operator="arithmetic" k1="0" k2="1" k3="1" k4="-0.5"/>
</filter>
</defs>
<rect x="0" y="0" width="1920" height="980" fill="#000"/>
<rect x="0" y="0" width="1834" height="1" fill="#a0a0a0"/>
<rect x="0" y="0" width="1" height="978" fill="#a0a0a0"/>
<rect x="52" y="70" width="1752" height="861" fill="url(#fb)"/>
<g filter="url(#spec)">
<rect x="52" y="70" width="1752" height="861" fill="url(#mg)"/>
<rect x="52" y="903" width="211" height="12" fill="#ff8040" opacity="0.06"/>
<rect x="52" y="925" width="211" height="6" fill="#ff8040" opacity="0.06"/>
<radialGradient id="bl0"><stop offset="0" stop-color="#83ffa6" stop-opacity="0.6"/><stop offset="0.55" stop-color="#83ffa6" stop-opacity="0.450"/><stop offset="1" stop-color="#83ffa6" stop-opacity="0"/></radialGradient>
<ellipse cx="400" cy="809" rx="190" ry="9" fill="url(#bl0)"/>
<radialGradient id="bl1"><stop offset="0" stop-color="#7cffa6" stop-opacity="0.35"/><stop offset="0.55" stop-color="#7cffa6" stop-opacity="0.262"/><stop offset="1" stop-color="#7cffa6" stop-opacity="0"/></radialGradient>
<ellipse cx="640" cy="808" rx="150" ry="7" fill="url(#bl1)"/>
<radialGradient id="bl2"><stop offset="0" stop-color="#86ffa6" stop-opacity="0.7"/><stop offset="0.55" stop-color="#86ffa6" stop-opacity="0.525"/><stop offset="1" stop-color="#86ffa6" stop-opacity="0"/></radialGradient>
<ellipse cx="1285" cy="815" rx="170" ry="8" fill="url(#bl2)"/>
<radialGradient id="bl3"><stop offset="0" stop-color="#79ffa6" stop-opacity="0.3"/><stop offset="0.55" stop-color="#79ffa6" stop-opacity="0.225"/><stop offset="1" stop-color="#79ffa6" stop-opacity="0"/></radialGradient>
<ellipse cx="1560" cy="802" rx="200" ry="7" fill="url(#bl3)"/>
<radialGradient id="bl4"><stop offset="0" stop-color="#8fffa6" stop-opacity="0.4"/><stop offset="0.55" stop-color="#8fffa6" stop-opacity="0.300"/><stop offset="1" stop-color="#8fffa6" stop-opacity="0"/></radialGradient>
<ellipse cx="450" cy="846.5" rx="220" ry="4" fill="url(#bl4)"/>
<radialGradient id="bl5"><stop offset="0" stop-color="#93ffa6" stop-opacity="0.5"/><stop offset="0.55" stop-color="#93ffa6" stop-opacity="0.375"/><stop offset="1" stop-color="#93ffa6" stop-opacity="0"/></radialGradient>
<ellipse cx="1275" cy="846.5" rx="200" ry="4" fill="url(#bl5)"/>
<radialGradient id="bl6"><stop offset="0" stop-color="#bcffa6" stop-opacity="0.65"/><stop offset="0.55" stop-color="#bcffa6" stop-opacity="0.488"/><stop offset="1" stop-color="#bcffa6" stop-opacity="0"/></radialGradient>
<ellipse cx="520" cy="874" rx="240" ry="6" fill="url(#bl6)"/>
<radialGradient id="bl7"><stop offset="0" stop-color="#bfffa6" stop-opacity="0.7"/><stop offset="0.55" stop-color="#bfffa6" stop-opacity="0.525"/><stop offset="1" stop-color="#bfffa6" stop-opacity="0"/></radialGradient>
<ellipse cx="1320" cy="874" rx="200" ry="6" fill="url(#bl7)"/>
<linearGradient id="l86" gradientUnits="userSpaceOnUse" x1="52" y1="0" x2="1804" y2="0">
<stop offset="0.0000" stop-color="#c14c00"/>
<stop offset="0.0382" stop-color="#c14c00"/>
<stop offset="0.0422" stop-color="#964c00"/>
<stop offset="0.0514" stop-color="#964c00"/>
<stop offset="0.0554" stop-color="#c14c00"/>
<stop offset="0.0811" stop-color="#c14c00"/>
<stop offset="0.0850" stop-color="#964c00"/>
<stop offset="0.0930" stop-color="#964c00"/>
<stop offset="0.0970" stop-color="#c14c00"/>
<stop offset="0.1678" stop-color="#c14c00"/>
<stop offset="0.1718" stop-color="#a64c00"/>
<stop offset="0.1855" stop-color="#a64c00"/>
<stop offset="0.1895" stop-color="#c14c00"/>
<stop offset="0.2021" stop-color="#c14c00"/>
<stop offset="0.2061" stop-color="#834c00"/>
<stop offset="0.2118" stop-color="#834c00"/>
<stop offset="0.2158" stop-color="#c14c00"/>
<stop offset="0.2380" stop-color="#c14c00"/>
<stop offset="0.2420" stop-color="#964c00"/>
<stop offset="0.2500" stop-color="#964c00"/>
<stop offset="0.2540" stop-color="#c14c00"/>
<stop offset="0.2745" stop-color="#c14c00"/>
<stop offset="0.2785" stop-color="#964c00"/>
<stop offset="0.2877" stop-color="#964c00"/>
<stop offset="0.2917" stop-color="#c14c00"/>
<stop offset="0.3613" stop-color="#c14c00"/>
<stop offset="0.3653" stop-color="#964c00"/>
<stop offset="0.3721" stop-color="#964c00"/>
<stop offset="0.3761" stop-color="#c14c00"/>
<stop offset="0.3950" stop-color="#c14c00"/>
<stop offset="0.3990" stop-color="#a34c00"/>
<stop offset="0.4161" stop-color="#a34c00"/>
<stop offset="0.4201" stop-color="#c14c00"/>
<stop offset="0.4355" stop-color="#c14c00"/>
<stop offset="0.4395" stop-color="#834c00"/>
<stop offset="0.4452" stop-color="#834c00"/>
<stop offset="0.4492" stop-color="#c14c00"/>
<stop offset="0.4806" stop-color="#c14c00"/>
<stop offset="0.4846" stop-color="#994c00"/>
<stop offset="0.4914" stop-color="#994c00"/>
<stop offset="0.4954" stop-color="#c14c00"/>
<stop offset="0.6787" stop-color="#c14c00"/>
<stop offset="0.6826" stop-color="#964c00"/>
<stop offset="0.6918" stop-color="#964c00"/>
<stop offset="0.6958" stop-color="#c14c00"/>
<stop offset="0.7249" stop-color="#c14c00"/>
<stop offset="0.7289" stop-color="#834c00"/>
<stop offset="0.7346" stop-color="#834c00"/>
<stop offset="0.7386" stop-color="#c14c00"/>
<stop offset="0.7312" stop-color="#c14c00"/>
<stop offset="0.7352" stop-color="#ac4c00"/>
<stop offset="0.7637" stop-color="#ac4c00"/>
<stop offset="0.7677" stop-color="#c14c00"/>
<stop offset="0.7962" stop-color="#c14c00"/>
<stop offset="0.8002" stop-color="#964c00"/>
<stop offset="0.8082" stop-color="#964c00"/>
<stop offset="0.8122" stop-color="#c14c00"/>
<stop offset="0.8390" stop-color="#c14c00"/>
<stop offset="0.8430" stop-color="#a94c00"/>
<stop offset="0.8499" stop-color="#a94c00"/>
<stop offset="0.8539" stop-color="#c14c00"/>
<stop offset="0.8864" stop-color="#c14c00"/>
<stop offset="0.8904" stop-color="#964c00"/>
<stop offset="0.8984" stop-color="#964c00"/>
<stop offset="0.9024" stop-color="#c14c00"/>
<stop offset="0.9600" stop-color="#c14c00"/>
<stop offset="0.9640" stop-color="#964c00"/>
<stop offset="0.9720" stop-color="#964c00"/>
<stop offset="0.9760" stop-color="#c14c00"/>
<stop offset="1.0000" stop-color="#c14c00"/>
</linearGradient>
<rect x="52" y="556" width="1752" height="2" fill="url(#l86)"/>
</g>
<filter id="bs" filterUnits="userSpaceOnUse" x="52" y="915" width="1752" height="10" color-interpolation-filters="sRGB"><feTurbulence type="fractalNoise" baseFrequency="0.13 0.45" numOctaves="2" seed="5"/><feColorMatrix type="matrix" values="0 0 0 0 0.09 0 0 0 0 0.40 0 0 0 0 0.70 7 0 0 0 -3.85"/></filter>
<rect x="52" y="915" width="1752" height="10" filter="url(#bs)"/>
<rect x="263" y="70" width="18" height="861" fill="#fff"/>
<rect x="974" y="70" width="177" height="861" fill="#fff"/>
<path d="M56 65h1v3h-1zM66 65h1v3h-1zM77 65h1v3h-1zM87 63h1v5h-1zM97 65h1v3h-1zM108 65h1v3h-1zM118 65h1v3h-1zM129 65h1v3h-1zM139 63h1v5h-1zM150 65h1v3h-1zM160 65h1v3h-1zM170 65h1v3h-1zM181 65h1v3h-1zM191 63h1v5h-1zM202 65h1v3h-1zM212 65h1v3h-1zM223 65h1v3h-1zM233 65h1v3h-1zM243 63h1v5h-1zM254 65h1v3h-1zM264 65h1v3h-1zM275 65h1v3h-1zM285 65h1v3h-1zM296 63h1v5h-1zM306 65h1v3h-1zM316 65h1v3h-1zM327 65h1v3h-1zM337 65h1v3h-1zM348 63h1v5h-1zM358 65h1v3h-1zM369 65h1v3h-1zM379 65h1v3h-1zM389 65h1v3h-1zM400 63h1v5h-1zM410 65h1v3h-1zM421 65h1v3h-1zM431 65h1v3h-1zM442 65h1v3h-1zM452 63h1v5h-1zM462 65h1v3h-1zM473 65h1v3h-1zM483 65h1v3h-1zM494 65h1v3h-1zM504 63h1v5h-1zM515 65h1v3h-1zM525 65h1v3h-1zM535 65h1v3h-1zM546 65h1v3h-1zM556 63h1v5h-1zM567 65h1v3h-1zM577 65h1v3h-1zM588 65h1v3h-1zM598 65h1v3h-1zM608 63h1v5h-1zM619 65h1v3h-1zM629 65h1v3h-1zM640 65h1v3h-1zM650 65h1v3h-1zM661 63h1v5h-1zM671 65h1v3h-1zM681 65h1v3h-1zM692 65h1v3h-1zM702 65h1v3h-1zM713 63h1v5h-1zM723 65h1v3h-1zM734 65h1v3h-1zM744 65h1v3h-1zM754 65h1v3h-1zM765 63h1v5h-1zM775 65h1v3h-1zM786 65h1v3h-1zM796 65h1v3h-1zM807 65h1v3h-1zM817 63h1v5h-1zM827 65h1v3h-1zM838 65h1v3h-1zM848 65h1v3h-1zM859 65h1v3h-1zM869 63h1v5h-1zM880 65h1v3h-1zM890 65h1v3h-1zM900 65h1v3h-1zM911 65h1v3h-1zM921 63h1v5h-1zM932 65h1v3h-1zM942 65h1v3h-1zM953 65h1v3h-1zM963 65h1v3h-1zM973 63h1v5h-1zM984 65h1v3h-1zM994 65h1v3h-1zM1005 65h1v3h-1zM1015 65h1v3h-1zM1026 63h1v5h-1zM1036 65h1v3h-1zM1046 65h1v3h-1zM1057 65h1v3h-1zM1067 65h1v3h-1zM1078 63h1v5h-1zM1088 65h1v3h-1zM1099 65h1v3h-1zM1109 65h1v3h-1zM1119 65h1v3h-1zM1130 63h1v5h-1zM1140 65h1v3h-1zM1151 65h1v3h-1zM1161 65h1v3h-1zM1172 65h1v3h-1zM1182 63h1v5h-1zM1192 65h1v3h-1zM1203 65h1v3h-1zM1213 65h1v3h-1zM1224 65h1v3h-1zM1234 63h1v5h-1zM1245 65h1v3h-1zM1255 65h1v3h-1zM1265 65h1v3h-1zM1276 65h1v3h-1zM1286 63h1v5h-1zM1297 65h1v3h-1zM1307 65h1v3h-1zM1318 65h1v3h-1zM1328 65h1v3h-1zM1338 63h1v5h-1zM1349 65h1v3h-1zM1359 65h1v3h-1zM1370 65h1v3h-1zM1380 65h1v3h-1zM1391 63h1v5h-1zM1401 65h1v3h-1zM1411 65h1v3h-1zM1422 65h1v3h-1zM1432 65h1v3h-1zM1443 63h1v5h-1zM1453 65h1v3h-1zM1464 65h1v3h-1zM1474 65h1v3h-1zM1484 65h1v3h-1zM1495 63h1v5h-1zM1505 65h1v3h-1zM1516 65h1v3h-1zM1526 65h1v3h-1zM1537 65h1v3h-1zM1547 63h1v5h-1zM1557 65h1v3h-1zM1568 65h1v3h-1zM1578 65h1v3h-1zM1589 65h1v3h-1zM1599 63h1v5h-1zM1610 65h1v3h-1zM1620 65h1v3h-1zM1630 65h1v3h-1zM1641 65h1v3h-1zM1651 63h1v5h-1zM1662 65h1v3h-1zM1672 65h1v3h-1zM1683 65h1v3h-1zM1693 65h1v3h-1zM1703 63h1v5h-1zM1714 65h1v3h-1zM1724 65h1v3h-1zM1735 65h1v3h-1zM1745 65h1v3h-1zM1756 63h1v5h-1zM1766 65h1v3h-1zM1776 65h1v3h-1zM1787 65h1v3h-1zM1797 65h1v3h-1zM52 63h1v5h-1zM1803 63h1v5h-1zM55 933h1v3h-1zM61 933h1v5h-1zM68 933h1v3h-1zM74 933h1v3h-1zM81 933h1v3h-1zM87 933h1v3h-1zM93 933h1v3h-1zM100 933h1v3h-1zM106 933h1v3h-1zM112 933h1v3h-1zM119 933h1v3h-1zM125 933h1v3h-1zM131 933h1v3h-1zM138 933h1v5h-1zM144 933h1v3h-1zM151 933h1v3h-1zM157 933h1v3h-1zM163 933h1v3h-1zM170 933h1v3h-1zM176 933h1v3h-1zM182 933h1v3h-1zM189 933h1v3h-1zM195 933h1v3h-1zM201 933h1v3h-1zM208 933h1v3h-1zM214 933h1v5h-1zM221 933h1v3h-1zM227 933h1v3h-1zM233 933h1v3h-1zM240 933h1v3h-1zM246 933h1v3h-1zM252 933h1v3h-1zM259 933h1v3h-1zM265 933h1v3h-1zM271 933h1v3h-1zM278 933h1v3h-1zM284 933h1v3h-1zM290 933h1v5h-1zM297 933h1v3h-1zM303 933h1v3h-1zM310 933h1v3h-1zM316 933h1v3h-1zM322 933h1v3h-1zM329 933h1v3h-1zM335 933h1v3h-1zM341 933h1v3h-1zM348 933h1v3h-1zM354 933h1v3h-1zM360 933h1v3h-1zM367 933h1v5h-1zM373 933h1v3h-1zM380 933h1v3h-1zM386 933h1v3h-1zM392 933h1v3h-1zM399 933h1v3h-1zM405 933h1v3h-1zM411 933h1v3h-1zM418 933h1v3h-1zM424 933h1v3h-1zM430 933h1v3h-1zM437 933h1v3h-1zM443 933h1v5h-1zM450 933h1v3h-1zM456 933h1v3h-1zM462 933h1v3h-1zM469 933h1v3h-1zM475 933h1v3h-1zM481 933h1v3h-1zM488 933h1v3h-1zM494 933h1v3h-1zM500 933h1v3h-1zM507 933h1v3h-1zM513 933h1v3h-1zM519 933h1v5h-1zM526 933h1v3h-1zM532 933h1v3h-1zM539 933h1v3h-1zM545 933h1v3h-1zM551 933h1v3h-1zM558 933h1v3h-1zM564 933h1v3h-1zM570 933h1v3h-1zM577 933h1v3h-1zM583 933h1v3h-1zM589 933h1v3h-1zM596 933h1v5h-1zM602 933h1v3h-1zM609 933h1v3h-1zM615 933h1v3h-1zM621 933h1v3h-1zM628 933h1v3h-1zM634 933h1v3h-1zM640 933h1v3h-1zM647 933h1v3h-1zM653 933h1v3h-1zM659 933h1v3h-1zM666 933h1v3h-1zM672 933h1v5h-1zM679 933h1v3h-1zM685 933h1v3h-1zM691 933h1v3h-1zM698 933h1v3h-1zM704 933h1v3h-1zM710 933h1v3h-1zM717 933h1v3h-1zM723 933h1v3h-1zM729 933h1v3h-1zM736 933h1v3h-1zM742 933h1v3h-1zM749 933h1v5h-1zM755 933h1v3h-1zM761 933h1v3h-1zM768 933h1v3h-1zM774 933h1v3h-1zM780 933h1v3h-1zM787 933h1v3h-1zM793 933h1v3h-1zM799 933h1v3h-1zM806 933h1v3h-1zM812 933h1v3h-1zM818 933h1v3h-1zM825 933h1v5h-1zM831 933h1v3h-1zM838 933h1v3h-1zM844 933h1v3h-1zM850 933h1v3h-1zM857 933h1v3h-1zM863 933h1v3h-1zM869 933h1v3h-1zM876 933h1v3h-1zM882 933h1v3h-1zM888 933h1v3h-1zM895 933h1v3h-1zM901 933h1v5h-1zM908 933h1v3h-1zM914 933h1v3h-1zM920 933h1v3h-1zM927 933h1v3h-1zM933 933h1v3h-1zM939 933h1v3h-1zM946 933h1v3h-1zM952 933h1v3h-1zM958 933h1v3h-1zM965 933h1v3h-1zM971 933h1v3h-1zM978 933h1v5h-1zM984 933h1v3h-1zM990 933h1v3h-1zM997 933h1v3h-1zM1003 933h1v3h-1zM1009 933h1v3h-1zM1016 933h1v3h-1zM1022 933h1v3h-1zM1028 933h1v3h-1zM1035 933h1v3h-1zM1041 933h1v3h-1zM1047 933h1v3h-1zM1054 933h1v5h-1zM1060 933h1v3h-1zM1067 933h1v3h-1zM1073 933h1v3h-1zM1079 933h1v3h-1zM1086 933h1v3h-1zM1092 933h1v3h-1zM1098 933h1v3h-1zM1105 933h1v3h-1zM1111 933h1v3h-1zM1117 933h1v3h-1zM1124 933h1v3h-1zM1130 933h1v5h-1zM1137 933h1v3h-1zM1143 933h1v3h-1zM1149 933h1v3h-1zM1156 933h1v3h-1zM1162 933h1v3h-1zM1168 933h1v3h-1zM1175 933h1v3h-1zM1181 933h1v3h-1zM1187 933h1v3h-1zM1194 933h1v3h-1zM1200 933h1v3h-1zM1207 933h1v5h-1zM1213 933h1v3h-1zM1219 933h1v3h-1zM1226 933h1v3h-1zM1232 933h1v3h-1zM1238 933h1v3h-1zM1245 933h1v3h-1zM1251 933h1v3h-1zM1257 933h1v3h-1zM1264 933h1v3h-1zM1270 933h1v3h-1zM1277 933h1v3h-1zM1283 933h1v5h-1zM1289 933h1v3h-1zM1296 933h1v3h-1zM1302 933h1v3h-1zM1308 933h1v3h-1zM1315 933h1v3h-1zM1321 933h1v3h-1zM1327 933h1v3h-1zM1334 933h1v3h-1zM1340 933h1v3h-1zM1346 933h1v3h-1zM1353 933h1v3h-1zM1359 933h1v5h-1zM1366 933h1v3h-1zM1372 933h1v3h-1zM1378 933h1v3h-1zM1385 933h1v3h-1zM1391 933h1v3h-1zM1397 933h1v3h-1zM1404 933h1v3h-1zM1410 933h1v3h-1zM1416 933h1v3h-1zM1423 933h1v3h-1zM1429 933h1v3h-1zM1436 933h1v5h-1zM1442 933h1v3h-1zM1448 933h1v3h-1zM1455 933h1v3h-1zM1461 933h1v3h-1zM1467 933h1v3h-1zM1474 933h1v3h-1zM1480 933h1v3h-1zM1486 933h1v3h-1zM1493 933h1v3h-1zM1499 933h1v3h-1zM1506 933h1v3h-1zM1512 933h1v5h-1zM1518 933h1v3h-1zM1525 933h1v3h-1zM1531 933h1v3h-1zM1537 933h1v3h-1zM1544 933h1v3h-1zM1550 933h1v3h-1zM1556 933h1v3h-1zM1563 933h1v3h-1zM1569 933h1v3h-1zM1575 933h1v3h-1zM1582 933h1v3h-1zM1588 933h1v5h-1zM1595 933h1v3h-1zM1601 933h1v3h-1zM1607 933h1v3h-1zM1614 933h1v3h-1zM1620 933h1v3h-1zM1626 933h1v3h-1zM1633 933h1v3h-1zM1639 933h1v3h-1zM1645 933h1v3h-1zM1652 933h1v3h-1zM1658 933h1v3h-1zM1665 933h1v5h-1zM1671 933h1v3h-1zM1677 933h1v3h-1zM1684 933h1v3h-1zM1690 933h1v3h-1zM1696 933h1v3h-1zM1703 933h1v3h-1zM1709 933h1v3h-1zM1715 933h1v3h-1zM1722 933h1v3h-1zM1728 933h1v3h-1zM1735 933h1v3h-1zM1741 933h1v5h-1zM1747 933h1v3h-1zM1754 933h1v3h-1zM1760 933h1v3h-1zM1766 933h1v3h-1zM1773 933h1v3h-1zM1779 933h1v3h-1zM1785 933h1v3h-1zM1792 933h1v3h-1zM1798 933h1v3h-1zM52 933h1v5h-1zM1803 933h1v5h-1zM45 70h5v1h-5zM1806 70h5v1h-5zM47 81h3v1h-3zM1806 81h3v1h-3zM45 91h5v1h-5zM1806 91h5v1h-5zM47 102h3v1h-3zM1806 102h3v1h-3zM45 113h5v1h-5zM1806 113h5v1h-5zM47 124h3v1h-3zM1806 124h3v1h-3zM45 134h5v1h-5zM1806 134h5v1h-5zM47 145h3v1h-3zM1806 145h3v1h-3zM45 156h5v1h-5zM1806 156h5v1h-5zM47 167h3v1h-3zM1806 167h3v1h-3zM45 177h5v1h-5zM1806 177h5v1h-5zM47 188h3v1h-3zM1806 188h3v1h-3zM45 199h5v1h-5zM1806 199h5v1h-5zM47 210h3v1h-3zM1806 210h3v1h-3zM45 220h5v1h-5zM1806 220h5v1h-5zM47 231h3v1h-3zM1806 231h3v1h-3zM45 242h5v1h-5zM1806 242h5v1h-5zM47 253h3v1h-3zM1806 253h3v1h-3zM45 263h5v1h-5zM1806 263h5v1h-5zM47 274h3v1h-3zM1806 274h3v1h-3zM45 285h5v1h-5zM1806 285h5v1h-5zM47 296h3v1h-3zM1806 296h3v1h-3zM45 306h5v1h-5zM1806 306h5v1h-5zM47 317h3v1h-3zM1806 317h3v1h-3zM45 328h5v1h-5zM1806 328h5v1h-5zM47 339h3v1h-3zM1806 339h3v1h-3zM45 349h5v1h-5zM1806 349h5v1h-5zM47 360h3v1h-3zM1806 360h3v1h-3zM45 371h5v1h-5zM1806 371h5v1h-5zM47 382h3v1h-3zM1806 382h3v1h-3zM45 392h5v1h-5zM1806 392h5v1h-5zM47 403h3v1h-3zM1806 403h3v1h-3zM45 414h5v1h-5zM1806 414h5v1h-5zM47 425h3v1h-3zM1806 425h3v1h-3zM45 435h5v1h-5zM1806 435h5v1h-5zM47 446h3v1h-3zM1806 446h3v1h-3zM45 457h5v1h-5zM1806 457h5v1h-5zM47 468h3v1h-3zM1806 468h3v1h-3zM45 478h5v1h-5zM1806 478h5v1h-5zM47 489h3v1h-3zM1806 489h3v1h-3zM45 500h5v1h-5zM1806 500h5v1h-5zM47 510h3v1h-3zM1806 510h3v1h-3zM45 521h5v1h-5zM1806 521h5v1h-5zM47 532h3v1h-3zM1806 532h3v1h-3zM45 543h5v1h-5zM1806 543h5v1h-5zM47 553h3v1h-3zM1806 553h3v1h-3zM45 564h5v1h-5zM1806 564h5v1h-5zM47 575h3v1h-3zM1806 575h3v1h-3zM45 586h5v1h-5zM1806 586h5v1h-5zM47 596h3v1h-3zM1806 596h3v1h-3zM45 607h5v1h-5zM1806 607h5v1h-5zM47 618h3v1h-3zM1806 618h3v1h-3zM45 629h5v1h-5zM1806 629h5v1h-5zM47 639h3v1h-3zM1806 639h3v1h-3zM45 650h5v1h-5zM1806 650h5v1h-5zM47 661h3v1h-3zM1806 661h3v1h-3zM45 672h5v1h-5zM1806 672h5v1h-5zM47 682h3v1h-3zM1806 682h3v1h-3zM45 693h5v1h-5zM1806 693h5v1h-5zM47 704h3v1h-3zM1806 704h3v1h-3zM45 715h5v1h-5zM1806 715h5v1h-5zM47 725h3v1h-3zM1806 725h3v1h-3zM45 736h5v1h-5zM1806 736h5v1h-5zM47 747h3v1h-3zM1806 747h3v1h-3zM45 758h5v1h-5zM1806 758h5v1h-5zM47 768h3v1h-3zM1806 768h3v1h-3zM45 779h5v1h-5zM1806 779h5v1h-5zM47 790h3v1h-3zM1806 790h3v1h-3zM45 801h5v1h-5zM1806 801h5v1h-5zM47 811h3v1h-3zM1806 811h3v1h-3zM45 822h5v1h-5zM1806 822h5v1h-5zM47 833h3v1h-3zM1806 833h3v1h-3zM45 844h5v1h-5zM1806 844h5v1h-5zM47 854h3v1h-3zM1806 854h3v1h-3zM45 865h5v1h-5zM1806 865h5v1h-5zM47 876h3v1h-3zM1806 876h3v1h-3zM45 887h5v1h-5zM1806 887h5v1h-5zM47 897h3v1h-3zM1806 897h3v1h-3zM45 908h5v1h-5zM1806 908h5v1h-5zM47 919h3v1h-3zM1806 919h3v1h-3zM45 929h5v1h-5zM1806 929h5v1h-5z" fill="#fff"/>
<g font-size="11" opacity="0.999">
<text x="43.5" y="933" text-anchor="end">0</text>
<text x="43.5" y="912" text-anchor="end">5</text>
<text x="43.5" y="891" text-anchor="end">10</text>
<text x="43.5" y="869" text-anchor="end">15</text>
<text x="43.5" y="848" text-anchor="end">20</text>
<text x="43.5" y="826" text-anchor="end">25</text>
<text x="43.5" y="805" text-anchor="end">30</text>
<text x="43.5" y="783" text-anchor="end">35</text>
<text x="43.5" y="762" text-anchor="end">40</text>
<text x="43.5" y="740" text-anchor="end">45</text>
<text x="43.5" y="719" text-anchor="end">50</text>
<text x="43.5" y="697" text-anchor="end">55</text>
<text x="43.5" y="676" text-anchor="end">60</text>
<text x="43.5" y="654" text-anchor="end">65</text>
<text x="43.5" y="633" text-anchor="end">70</text>
<text x="43.5" y="611" text-anchor="end">75</text>
<text x="43.5" y="590" text-anchor="end">80</text>
<text x="43.5" y="568" text-anchor="end">85</text>
<text x="43.5" y="547" text-anchor="end">90</text>
<text x="43.5" y="525" text-anchor="end">95</text>
<text x="43.5" y="504" text-anchor="end">100</text>
<text x="43.5" y="482" text-anchor="end">105</text>
<text x="43.5" y="461" text-anchor="end">110</text>
<text x="43.5" y="439" text-anchor="end">115</text>
<text x="43.5" y="418" text-anchor="end">120</text>
<text x="43.5" y="396" text-anchor="end">125</text>
<text x="43.5" y="375" text-anchor="end">130</text>
<text x="43.5" y="353" text-anchor="end">135</text>
<text x="43.5" y="332" text-anchor="end">140</text>
<text x="43.5" y="310" text-anchor="end">145</text>
<text x="43.5" y="289" text-anchor="end">150</text>
<text x="43.5" y="267" text-anchor="end">155</text>
<text x="43.5" y="246" text-anchor="end">160</text>
<text x="43.5" y="224" text-anchor="end">165</text>
<text x="43.5" y="203" text-anchor="end">170</text>
<text x="43.5" y="181" text-anchor="end">175</text>
<text x="43.5" y="160" text-anchor="end">180</text>
<text x="43.5" y="138" text-anchor="end">185</text>
<text x="43.5" y="117" text-anchor="end">190</text>
<text x="43.5" y="95" text-anchor="end">195</text>
<text x="43.5" y="74" text-anchor="end">200</text>
<text x="52" y="61" text-anchor="middle">4166</text>
<text x="87.5" y="61" text-anchor="middle">4200</text>
<text x="139.5" y="61" text-anchor="middle">4250</text>
<text x="191.5" y="61" text-anchor="middle">4300</text>
<text x="243.5" y="61" text-anchor="middle">4350</text>
<text x="296.5" y="61" text-anchor="middle">4400</text>
<text x="348.5" y="61" text-anchor="middle">4450</text>
<text x="400.5" y="61" text-anchor="middle">4500</text>
<text x="452.5" y="61" text-anchor="middle">4550</text>
<text x="504.5" y="61" text-anchor="middle">4600</text>
<text x="556.5" y="61" text-anchor="middle">4650</text>
<text x="608.5" y="61" text-anchor="middle">4700</text>
<text x="661.5" y="61" text-anchor="middle">4750</text>
<text x="713.5" y="61" text-anchor="middle">4800</text>
<text x="765.5" y="61" text-anchor="middle">4850</text>
<text x="817.5" y="61" text-anchor="middle">4900</text>
<text x="869.5" y="61" text-anchor="middle">4950</text>
<text x="921.5" y="61" text-anchor="middle">5000</text>
<text x="973.5" y="61" text-anchor="middle">5050</text>
<text x="1026.5" y="61" text-anchor="middle">5100</text>
<text x="1078.5" y="61" text-anchor="middle">5150</text>
<text x="1130.5" y="61" text-anchor="middle">5200</text>
<text x="1182.5" y="61" text-anchor="middle">5250</text>
<text x="1234.5" y="61" text-anchor="middle">5300</text>
<text x="1286.5" y="61" text-anchor="middle">5350</text>
<text x="1338.5" y="61" text-anchor="middle">5400</text>
<text x="1391.5" y="61" text-anchor="middle">5450</text>
<text x="1443.5" y="61" text-anchor="middle">5500</text>
<text x="1495.5" y="61" text-anchor="middle">5550</text>
<text x="1547.5" y="61" text-anchor="middle">5600</text>
<text x="1599.5" y="61" text-anchor="middle">5650</text>
<text x="1651.5" y="61" text-anchor="middle">5700</text>
<text x="1703.5" y="61" text-anchor="middle">5750</text>
<text x="1756.5" y="61" text-anchor="middle">5800</text>
<text x="1803.5" y="61" text-anchor="middle">5846</text>
<text x="20.8" y="948" textLength="63.4" lengthAdjust="spacingAndGlyphs">23:14:22.789</text>
<text x="24.3" y="960" textLength="54.6" lengthAdjust="spacingAndGlyphs">02/26/2026</text>
<text x="106.6" y="948" textLength="63.4" lengthAdjust="spacingAndGlyphs">23:20:00.000</text>
<text x="110.1" y="960" textLength="54.6" lengthAdjust="spacingAndGlyphs">02/26/2026</text>
<text x="182.9" y="948" textLength="63.4" lengthAdjust="spacingAndGlyphs">23:25:00.000</text>
<text x="186.4" y="960" textLength="54.6" lengthAdjust="spacingAndGlyphs">02/26/2026</text>
<text x="259.3" y="948" textLength="63.4" lengthAdjust="spacingAndGlyphs">23:30:00.000</text>
<text x="262.8" y="960" textLength="54.6" lengthAdjust="spacingAndGlyphs">02/26/2026</text>
<text x="335.6" y="948" textLength="63.4" lengthAdjust="spacingAndGlyphs">23:35:00.000</text>
<text x="339.1" y="960" textLength="54.6" lengthAdjust="spacingAndGlyphs">02/26/2026</text>
<text x="412.0" y="948" textLength="63.4" lengthAdjust="spacingAndGlyphs">23:40:00.000</text>
<text x="415.5" y="960" textLength="54.6" lengthAdjust="spacingAndGlyphs">02/26/2026</text>
<text x="488.3" y="948" textLength="63.4" lengthAdjust="spacingAndGlyphs">23:45:00.000</text>
<text x="491.8" y="960" textLength="54.6" lengthAdjust="spacingAndGlyphs">02/26/2026</text>
<text x="564.6" y="948" textLength="63.4" lengthAdjust="spacingAndGlyphs">23:50:00.000</text>
<text x="568.1" y="960" textLength="54.6" lengthAdjust="spacingAndGlyphs">02/26/2026</text>
<text x="641.0" y="948" textLength="63.4" lengthAdjust="spacingAndGlyphs">23:55:00.000</text>
<text x="644.5" y="960" textLength="54.6" lengthAdjust="spacingAndGlyphs">02/26/2026</text>
<text x="717.3" y="948" textLength="63.4" lengthAdjust="spacingAndGlyphs">00:00:00.000</text>
<text x="720.8" y="960" textLength="54.6" lengthAdjust="spacingAndGlyphs">02/27/2026</text>
<text x="793.6" y="948" textLength="63.4" lengthAdjust="spacingAndGlyphs">00:05:00.000</text>
<text x="797.1" y="960" textLength="54.6" lengthAdjust="spacingAndGlyphs">02/27/2026</text>
<text x="870.0" y="948" textLength="63.4" lengthAdjust="spacingAndGlyphs">00:10:00.000</text>
<text x="873.5" y="960" textLength="54.6" lengthAdjust="spacingAndGlyphs">02/27/2026</text>
<text x="946.3" y="948" textLength="63.4" lengthAdjust="spacingAndGlyphs">00:15:00.000</text>
<text x="949.8" y="960" textLength="54.6" lengthAdjust="spacingAndGlyphs">02/27/2026</text>
<text x="1022.7" y="948" textLength="63.4" lengthAdjust="spacingAndGlyphs">00:20:00.000</text>
<text x="1026.2" y="960" textLength="54.6" lengthAdjust="spacingAndGlyphs">02/27/2026</text>
<text x="1099.0" y="948" textLength="63.4" lengthAdjust="spacingAndGlyphs">00:25:00.000</text>
<text x="1102.5" y="960" textLength="54.6" lengthAdjust="spacingAndGlyphs">02/27/2026</text>
<text x="1175.3" y="948" textLength="63.4" lengthAdjust="spacingAndGlyphs">00:30:00.000</text>
<text x="1178.8" y="960" textLength="54.6" lengthAdjust="spacingAndGlyphs">02/27/2026</text>
<text x="1251.7" y="948" textLength="63.4" lengthAdjust="spacingAndGlyphs">00:35:00.000</text>
<text x="1255.2" y="960" textLength="54.6" lengthAdjust="spacingAndGlyphs">02/27/2026</text>
<text x="1328.0" y="948" textLength="63.4" lengthAdjust="spacingAndGlyphs">00:40:00.000</text>
<text x="1331.5" y="960" textLength="54.6" lengthAdjust="spacingAndGlyphs">02/27/2026</text>
<text x="1404.3" y="948" textLength="63.4" lengthAdjust="spacingAndGlyphs">00:45:00.000</text>
<text x="1407.8" y="960" textLength="54.6" lengthAdjust="spacingAndGlyphs">02/27/2026</text>
<text x="1480.7" y="948" textLength="63.4" lengthAdjust="spacingAndGlyphs">00:50:00.000</text>
<text x="1484.2" y="960" textLength="54.6" lengthAdjust="spacingAndGlyphs">02/27/2026</text>
<text x="1557.0" y="948" textLength="63.4" lengthAdjust="spacingAndGlyphs">00:55:00.000</text>
<text x="1560.5" y="960" textLength="54.6" lengthAdjust="spacingAndGlyphs">02/27/2026</text>
<text x="1633.4" y="948" textLength="63.4" lengthAdjust="spacingAndGlyphs">01:00:00.000</text>
<text x="1636.9" y="960" textLength="54.6" lengthAdjust="spacingAndGlyphs">02/27/2026</text>
<text x="1771.8" y="948" textLength="63.4" lengthAdjust="spacingAndGlyphs">01:09:04.070</text>
<text x="1775.3" y="960" textLength="54.6" lengthAdjust="spacingAndGlyphs">02/27/2026</text>
<text x="914.9" y="974" textLength="20" lengthAdjust="spacingAndGlyphs">Time</text>
<text x="1868.5" y="83">-5.00</text>
<text x="1868.5" y="511">-9.00</text>
<text x="1868.5" y="939">-13.00</text>
<text transform="translate(1908.5,444.5) rotate(90)" textLength="126" lengthAdjust="spacingAndGlyphs">Amplitude(Log10(g^2/Hz))</text>
</g>
<g font-size="11" font-weight="bold" opacity="0.999">
<text x="811.5" y="16" textLength="22.7" lengthAdjust="spacingAndGlyphs">AOS</text>
<text x="840.3" y="16" textLength="120.3" lengthAdjust="spacingAndGlyphs">Fri 27 Feb 2026 01:08:51</text>
<text x="967.5" y="16" textLength="23.0" lengthAdjust="spacingAndGlyphs">AOS</text>
<text x="727.0" y="28" textLength="95.5" lengthAdjust="spacingAndGlyphs">CoordSystem:es18</text>
<text x="831.1" y="28" textLength="72.2" lengthAdjust="spacingAndGlyphs">SensorID:es18</text>
<text x="915.4" y="28" textLength="48.1" lengthAdjust="spacingAndGlyphs">Axis:sum</text>
<text x="975.5" y="28" textLength="98.5" lengthAdjust="spacingAndGlyphs">Windowing:Hanning</text>
<text x="617.9" y="40" textLength="78.9" lengthAdjust="spacingAndGlyphs">Cuttoff(Hz):200</text>
<text x="714.2" y="40" textLength="67.6" lengthAdjust="spacingAndGlyphs">df(Hz):0.2441</text>
<text x="799.2" y="40" textLength="80.7" lengthAdjust="spacingAndGlyphs">Sample/Sec:500</text>
<text x="900.2" y="40" textLength="72.1" lengthAdjust="spacingAndGlyphs">PSD size:2048</text>
<text x="993.3" y="40" textLength="64.0" lengthAdjust="spacingAndGlyphs">Overlap(%):0</text>
<text x="1081.8" y="40" textLength="101.9" lengthAdjust="spacingAndGlyphs">TimeRes.(sec):4.096</text>
</g>
<rect x="1841" y="74" width="18" height="3" fill="#f85a90"/>
<rect x="1841" y="79" width="18" height="857" fill="url(#cbg)"/>
<rect x="1841" y="937" width="18" height="3" fill="#fff"/>
</svg></body></html>
